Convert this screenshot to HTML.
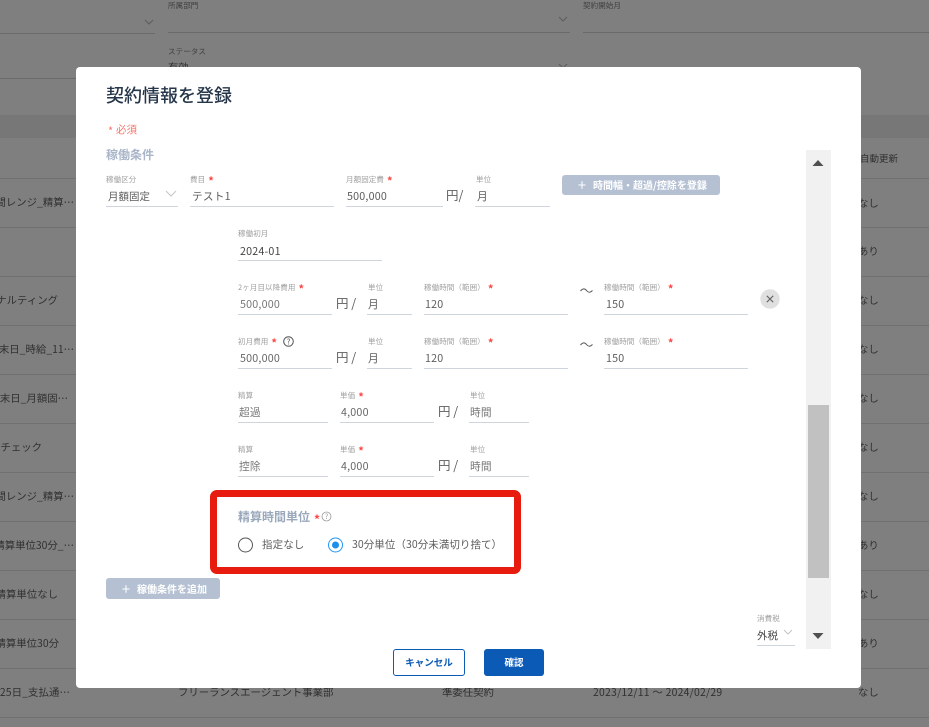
<!DOCTYPE html>
<html lang="ja"><head><meta charset="utf-8"><title>契約情報を登録</title>
<style>
html,body{margin:0;padding:0}
body{width:929px;height:727px;position:relative;overflow:hidden;background:#7f7f7f;font-family:"Liberation Sans","Noto Sans CJK JP",sans-serif;color:#333}
body *{font-family:"Noto Sans CJK JP","Liberation Sans",sans-serif}
div,span.a,svg{position:absolute}
.t{white-space:nowrap}
.bg{font-size:10.4px;line-height:16px;color:#303030;white-space:nowrap}
.r{right:855px;text-align:right}
.ln{left:0;width:929px;height:1px;background:#717171}
#m{left:76px;top:67px;width:785px;height:621px;background:#fff;border-radius:4px}
.l{font-size:7.5px;line-height:10px;color:#a0a0a0;white-space:nowrap;letter-spacing:.1px}
.l b{color:#f44;font-weight:700;font-size:11px;line-height:0;margin-left:3px;position:relative;top:2.5px}
.v{font-size:10.7px;line-height:16px;color:#5c5c5c;white-space:nowrap;letter-spacing:.2px;margin-top:1px}
.u{height:1px;background:#cfd5dd}
.y{font-size:12.5px;line-height:16px;color:#5c5c5c;white-space:nowrap}
.btn{background:#b5c1d3;border-radius:3px;color:#fff;font-size:10px;font-weight:700;line-height:20px;white-space:nowrap}
</style></head><body>

<div class="l" style="left:168px;top:1px;color:#3f3f3f">所属部門</div>
<div class="l" style="left:583px;top:1px;color:#3f3f3f">契約開始月</div>
<div style="left:0;top:33px;width:155px;height:1px;background:#6a6a6a"></div>
<div style="left:168px;top:32px;width:402px;height:1px;background:#6a6a6a"></div>
<div style="left:583px;top:32px;width:346px;height:1px;background:#6a6a6a"></div>
<div style="left:0;top:78px;width:155px;height:1px;background:#6a6a6a"></div>
<svg style="left:144px;top:18px" width="10" height="8"><path d="M1 2 5 6 9 2" fill="none" stroke="#5c5c5c"/></svg>
<svg style="left:558px;top:15px" width="10" height="8"><path d="M1 2 5 6 9 2" fill="none" stroke="#5c5c5c"/></svg>
<svg style="left:558px;top:62px" width="10" height="8"><path d="M1 2 5 6 9 2" fill="none" stroke="#5c5c5c"/></svg>
<div class="l" style="left:168px;top:47px;color:#3f3f3f">ステータス</div>
<div class="bg" style="left:168px;top:59px">有効</div>

<div style="left:0;top:115px;width:929px;height:23px;background:#777"></div>
<div class="ln" style="top:178px"></div><div class="ln" style="top:227px"></div><div class="ln" style="top:276px"></div><div class="ln" style="top:325px"></div><div class="ln" style="top:374px"></div><div class="ln" style="top:423px"></div><div class="ln" style="top:472px"></div><div class="ln" style="top:521px"></div><div class="ln" style="top:570px"></div><div class="ln" style="top:619px"></div><div class="ln" style="top:668px"></div><div class="ln" style="top:717px"></div>

<div class="bg r" style="top:194px">間レンジ_精算⋯</div>
<div class="bg r" style="top:292px;right:871px">ナルティング</div>
<div class="bg r" style="top:341px">末日_時給_11⋯</div>
<div class="bg r" style="top:390px;right:861px">末日_月額固⋯</div>
<div class="bg r" style="top:439px;right:887px">チェック</div>
<div class="bg r" style="top:488px">間レンジ_精算⋯</div>
<div class="bg r" style="top:537px">精算単位30分_⋯</div>
<div class="bg r" style="top:586px;right:871px">精算単位なし</div>
<div class="bg r" style="top:635px;right:870px">精算単位30分</div>
<div class="bg r" style="top:684px;right:859px;letter-spacing:.1px">25日_支払通⋯</div>
<div class="bg" style="left:178px;top:684px">フリーランスエージェント事業部</div>
<div class="bg" style="left:442px;top:684px">準委任契約</div>
<div class="bg" style="left:593px;top:684px;letter-spacing:.25px">2023/12/11 ～ 2024/02/29</div>
<div class="bg" style="left:860px;top:150px;font-size:9.5px">自動更新</div>
<div class="bg" style="left:858px;top:195px">なし</div>
<div class="bg" style="left:858px;top:243px">あり</div>
<div class="bg" style="left:858px;top:292px">なし</div>
<div class="bg" style="left:858px;top:341px">なし</div>
<div class="bg" style="left:858px;top:390px">なし</div>
<div class="bg" style="left:858px;top:439px">なし</div>
<div class="bg" style="left:858px;top:488px">なし</div>
<div class="bg" style="left:858px;top:537px">あり</div>
<div class="bg" style="left:858px;top:586px">なし</div>
<div class="bg" style="left:858px;top:635px">あり</div>
<div class="bg" style="left:858px;top:684px">なし</div>

<div id="m"></div>
<div class="t" style="left:106px;top:82px;font-size:18px;line-height:26px;font-weight:500;color:#26364a">契約情報を登録</div>
<div class="t" style="left:108px;top:123px;font-size:11px;line-height:16px;color:#f8756b">*</div>
<div class="t" style="left:116px;top:122px;font-size:10.5px;line-height:16px;color:#f8756b">必須</div>
<div class="t" style="left:106px;top:147px;font-size:12px;line-height:16px;font-weight:700;color:#a9b6c9">稼働条件</div>

<div class="l" style="left:106px;top:175px">稼働区分</div>
<div class="v" style="left:108px;top:188px;letter-spacing:0;font-size:10.5px">月額固定</div>
<svg style="left:165px;top:190px" width="12" height="8"><path d="M1 1 6 6 11 1" fill="none" stroke="#c4c4c4"/></svg>
<div class="u" style="left:106px;top:206px;width:72px"></div>
<div class="l" style="left:190px;top:175px">費目<b>*</b></div>
<div class="v" style="left:192px;top:188px">テスト1</div>
<div class="u" style="left:190px;top:206px;width:144px"></div>
<div class="l" style="left:346px;top:175px">月額固定費<b>*</b></div>
<div class="v" style="left:347px;top:188px">500,000</div>
<div class="u" style="left:346px;top:206px;width:97px"></div>
<div class="y" style="left:446px;top:187px">円/</div>
<div class="l" style="left:476px;top:175px">単位</div>
<div class="v" style="left:477px;top:188px">月</div>
<div class="u" style="left:475px;top:206px;width:75px"></div>
<div class="btn" style="left:562px;top:175px;width:158px;height:20px"><span style="margin-left:15px;margin-right:6px">＋</span>時間幅・超過/控除を登録</div>

<div class="l" style="left:238px;top:229px">稼働初月</div>
<div class="v" style="left:240px;top:243px;color:#444">2024-01</div>
<div class="u" style="left:238px;top:260px;width:144px"></div>

<div class="l" style="left:238px;top:283px">2ヶ月目以降費用<b>*</b></div>
<div class="v" style="left:240px;top:296px;color:#777">500,000</div>
<div class="u" style="left:238px;top:314px;width:94px"></div>
<div class="y" style="left:336px;top:295px">円 /</div>
<div class="l" style="left:368px;top:283px">単位</div>
<div class="v" style="left:368px;top:296px">月</div>
<div class="u" style="left:367px;top:314px;width:45px"></div>
<div class="l" style="left:424px;top:283px">稼働時間（範囲）<b>*</b></div>
<div class="v" style="left:425px;top:296px">120</div>
<div class="u" style="left:424px;top:314px;width:144px"></div>
<svg style="left:580px;top:287px" width="13" height="8"><path d="M.5 4C3 1 5 1.500 6.500 3.500S10 6 12.500 3.500" fill="none" stroke="#555" stroke-width="1"/></svg>
<div class="l" style="left:604px;top:283px">稼働時間（範囲）<b>*</b></div>
<div class="v" style="left:606px;top:296px">150</div>
<div class="u" style="left:604px;top:314px;width:144px"></div>
<svg style="left:760px;top:289px" width="20" height="20"><circle cx="10" cy="10" r="9.700" fill="#e0e0e0"/><path d="M6.800 6.800 13.200 13.200M13.200 6.800 6.800 13.200" stroke="#666" stroke-width="1.100"/></svg>

<div class="l" style="left:238px;top:337px">初月費用<b>*</b></div>
<svg style="left:283px;top:336px" width="11" height="11"><circle cx="5.500" cy="5.500" r="4.800" fill="none" stroke="#555"/><text x="5.500" y="8.300" font-size="7.500" text-anchor="middle" fill="#555">?</text></svg>
<div class="v" style="left:240px;top:350px;color:#666">500,000</div>
<div class="u" style="left:238px;top:368px;width:94px"></div>
<div class="y" style="left:336px;top:349px">円 /</div>
<div class="l" style="left:368px;top:337px">単位</div>
<div class="v" style="left:368px;top:350px">月</div>
<div class="u" style="left:367px;top:368px;width:45px"></div>
<div class="l" style="left:424px;top:337px">稼働時間（範囲）<b>*</b></div>
<div class="v" style="left:425px;top:350px">120</div>
<div class="u" style="left:424px;top:368px;width:144px"></div>
<svg style="left:580px;top:341px" width="13" height="8"><path d="M.5 4C3 1 5 1.500 6.500 3.500S10 6 12.500 3.500" fill="none" stroke="#555" stroke-width="1"/></svg>
<div class="l" style="left:604px;top:337px">稼働時間（範囲）<b>*</b></div>
<div class="v" style="left:606px;top:350px">150</div>
<div class="u" style="left:604px;top:368px;width:144px"></div>

<div class="l" style="left:238px;top:391px">精算</div>
<div class="v" style="left:239px;top:404px;color:#777">超過</div>
<div class="u" style="left:238px;top:422px;width:90px"></div>
<div class="l" style="left:340px;top:391px">単価<b>*</b></div>
<div class="v" style="left:341px;top:404px;color:#666">4,000</div>
<div class="u" style="left:340px;top:422px;width:94px"></div>
<div class="y" style="left:438px;top:403px">円 /</div>
<div class="l" style="left:470px;top:391px">単位</div>
<div class="v" style="left:470px;top:404px;color:#777">時間</div>
<div class="u" style="left:469px;top:422px;width:60px"></div>

<div class="l" style="left:238px;top:445px">精算</div>
<div class="v" style="left:239px;top:458px;color:#777">控除</div>
<div class="u" style="left:238px;top:476px;width:90px"></div>
<div class="l" style="left:340px;top:445px">単価<b>*</b></div>
<div class="v" style="left:341px;top:458px;color:#666">4,000</div>
<div class="u" style="left:340px;top:476px;width:94px"></div>
<div class="y" style="left:438px;top:457px">円 /</div>
<div class="l" style="left:470px;top:445px">単位</div>
<div class="v" style="left:470px;top:458px;color:#777">時間</div>
<div class="u" style="left:469px;top:476px;width:60px"></div>

<div style="left:210px;top:490px;width:297px;height:70px;border:7px solid #e81c0e;border-radius:7px;background:#fff"></div>
<div class="t" style="left:238px;top:509px;font-size:12px;line-height:16px;font-weight:700;color:#9aa8bb">精算時間単位</div>
<div class="t" style="left:314px;top:512px;font-size:12px;line-height:16px;font-weight:700;color:#f44">*</div>
<svg style="left:321px;top:511px" width="11" height="11"><circle cx="5.500" cy="5.500" r="4.500" fill="none" stroke="#9a9a9a" stroke-width=".8"/><text x="5.500" y="8" font-size="7" text-anchor="middle" fill="#9a9a9a">?</text></svg>
<svg style="left:237px;top:537px" width="17" height="16"><circle cx="8.500" cy="8" r="7" fill="#fff" stroke="#555" stroke-width="1"/></svg>
<div class="t" style="left:262px;top:537px;font-size:10.5px;line-height:16px;color:#5c5c5c;letter-spacing:.1px">指定なし</div>
<svg style="left:327px;top:537px" width="17" height="16"><circle cx="8.500" cy="8" r="7" fill="#fff" stroke="#2196f3" stroke-width="1"/><circle cx="8.500" cy="8" r="3.500" fill="#1a8fee"/></svg>
<div class="t" style="left:352px;top:537px;font-size:10.5px;line-height:16px;color:#5c5c5c;letter-spacing:.05px">30分単位（30分未満切り捨て）</div>

<div class="btn" style="left:106px;top:578px;width:114px;height:21px;line-height:21px"><span style="margin-left:15px;margin-right:6px">＋</span>稼働条件を追加</div>

<div class="l" style="left:757px;top:614px">消費税</div>
<div class="v" style="left:757px;top:627px;color:#444;letter-spacing:0;font-size:10.5px">外税</div>
<svg style="left:783px;top:629px" width="10" height="7"><path d="M1 1 5 5 9 1" fill="none" stroke="#c4c4c4"/></svg>
<div class="u" style="left:757px;top:645px;width:38px"></div>

<div style="left:806px;top:150px;width:25px;height:499px;background:#f1f1f1"></div>
<div style="left:808px;top:405px;width:21px;height:173px;background:#c1c1c1"></div>
<svg style="left:812px;top:159px" width="12" height="8"><path d="M6 1 11.500 7H.5Z" fill="#505050"/></svg>
<svg style="left:812px;top:632px" width="12" height="8"><path d="M.5 1H11.500L6 7Z" fill="#505050"/></svg>

<div class="t" style="left:393px;top:649px;width:70px;height:25px;border:1px solid #0b5ab5;border-radius:3px;background:#fff;color:#0b5ab5;font-size:9.5px;font-weight:700;line-height:25px;text-align:center">キャンセル</div>
<div class="t" style="left:484px;top:649px;width:60px;height:27px;border-radius:3px;background:#0b5ab5;color:#fff;font-size:9.5px;font-weight:700;line-height:27px;text-align:center">確認</div>

</body></html>
